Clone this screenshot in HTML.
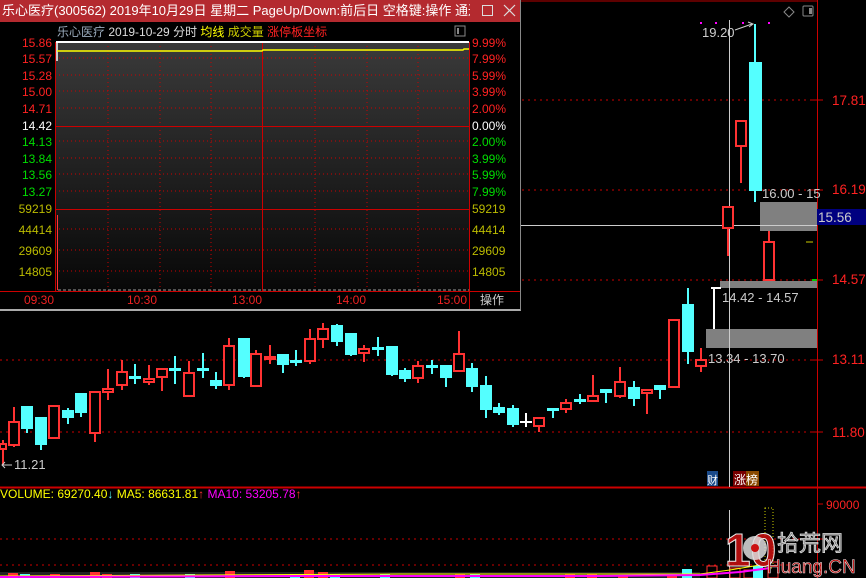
<!DOCTYPE html>
<html><head><meta charset="utf-8"><style>
html,body{margin:0;padding:0;background:#000;width:866px;height:578px;overflow:hidden}
body{position:relative;font-family:"Liberation Sans","Noto Sans CJK SC",sans-serif}
svg text{font-family:"Liberation Sans","Noto Sans CJK SC",sans-serif}
</style></head><body>
<svg width="866" height="578" style="position:absolute;left:0;top:0" xmlns="http://www.w3.org/2000/svg">
<line x1="0" y1="1" x2="817" y2="1" stroke="#b00" stroke-width="1"/>
<line x1="817.5" y1="0" x2="817.5" y2="578" stroke="#c00"/>
<line x1="0" y1="487.5" x2="866" y2="487.5" stroke="#c00" stroke-width="2"/>
<g stroke="#c00" stroke-dasharray="2,4">
<line x1="0" y1="100" x2="817" y2="100"/><line x1="0" y1="190" x2="817" y2="190"/>
<line x1="0" y1="280" x2="817" y2="280"/><line x1="0" y1="360" x2="817" y2="360"/>
<line x1="0" y1="432" x2="817" y2="432"/>
<line x1="0" y1="539" x2="817" y2="539"/><line x1="0" y1="565" x2="817" y2="565"/>
</g>
<g stroke="#c00"><line x1="812" y1="100" x2="823" y2="100"/><line x1="812" y1="190" x2="823" y2="190"/><line x1="812" y1="280" x2="823" y2="280"/><line x1="812" y1="360" x2="823" y2="360"/><line x1="812" y1="432" x2="823" y2="432"/><line x1="817" y1="504" x2="823" y2="504"/><line x1="817" y1="539" x2="823" y2="539"/></g>
<g fill="#f22" font-size="13.5">
<text x="832" y="105">17.81</text><text x="832" y="194">16.19</text><text x="832" y="284">14.57</text><text x="832" y="364">13.11</text><text x="832" y="437">11.80</text>
<text x="826" y="509" font-size="12">90000</text>
</g>
<rect x="817" y="209" width="49" height="16" fill="#000080"/>
<text x="818" y="222" fill="#ccc" font-size="13.5">15.56</text>
<rect x="706" y="329" width="111" height="19" fill="#808080"/>
<rect x="720" y="281" width="97" height="7" fill="#808080"/>
<rect x="760" y="202" width="57" height="29" fill="#808080"/>
<line x1="806" y1="242" x2="813" y2="242" stroke="#cc0"/>
<line x1="812" y1="280" x2="817" y2="280" stroke="#0c0" stroke-width="2"/>
<line x1="729.5" y1="20" x2="729.5" y2="487" stroke="#ccc"/>
<line x1="0" y1="225.5" x2="817" y2="225.5" stroke="#ccc"/>
<line x1="729.5" y1="510" x2="729.5" y2="578" stroke="#ccc"/>
<g stroke-width="2">
<g stroke="#ff3232" fill="#000">
<line x1="3" y1="440" x2="3" y2="465"/><rect x="0" y="444" width="6" height="5"/>
<line x1="14" y1="407" x2="14" y2="447"/><rect x="9" y="422" width="10" height="23"/>
<line x1="54" y1="406" x2="54" y2="438"/><rect x="49" y="406" width="10" height="32"/>
<line x1="95" y1="392" x2="95" y2="442"/><rect x="90" y="392" width="10" height="41"/>
<line x1="108" y1="369" x2="108" y2="400"/><rect x="103" y="389" width="10" height="3"/>
<line x1="122" y1="360" x2="122" y2="390"/><rect x="117" y="372" width="10" height="13"/>
<line x1="149" y1="365" x2="149" y2="385"/><rect x="144" y="379" width="10" height="3"/>
<line x1="162" y1="369" x2="162" y2="391"/><rect x="157" y="369" width="10" height="8"/>
<line x1="189" y1="361" x2="189" y2="396"/><rect x="184" y="373" width="10" height="23"/>
<line x1="229" y1="338" x2="229" y2="390"/><rect x="224" y="346" width="10" height="39"/>
<line x1="256" y1="350" x2="256" y2="386"/><rect x="251" y="354" width="10" height="32"/>
<line x1="270" y1="345" x2="270" y2="364"/><rect x="265" y="357" width="10" height="2"/>
<line x1="310" y1="329" x2="310" y2="364"/><rect x="305" y="339" width="10" height="22"/>
<line x1="323" y1="323" x2="323" y2="348"/><rect x="318" y="329" width="10" height="10"/>
<line x1="364" y1="345" x2="364" y2="362"/><rect x="359" y="349" width="10" height="4"/>
<line x1="418" y1="361" x2="418" y2="383"/><rect x="413" y="366" width="10" height="12"/>
<line x1="459" y1="331" x2="459" y2="371"/><rect x="454" y="354" width="10" height="17"/>
<line x1="539" y1="418" x2="539" y2="432"/><rect x="534" y="418" width="10" height="8"/>
<line x1="566" y1="399" x2="566" y2="413"/><rect x="561" y="403" width="10" height="6"/>
<line x1="593" y1="375" x2="593" y2="401"/><rect x="588" y="396" width="10" height="5"/>
<line x1="620" y1="367" x2="620" y2="398"/><rect x="615" y="382" width="10" height="14"/>
<line x1="647" y1="390" x2="647" y2="414"/><rect x="642" y="390" width="10" height="3"/>
<rect x="669" y="320" width="10" height="67"/>
<line x1="701" y1="348" x2="701" y2="372"/><rect x="696" y="360" width="10" height="6"/>
<line x1="728" y1="207" x2="728" y2="256"/><rect x="723" y="207" width="10" height="21"/>
<line x1="741" y1="120" x2="741" y2="183"/><rect x="736" y="121" width="10" height="25"/>
<line x1="769" y1="231" x2="769" y2="242"/><rect x="764" y="242" width="10" height="38"/>
</g>
<g stroke="#54ffff" fill="#54ffff">
<line x1="27" y1="407" x2="27" y2="433"/><rect x="22" y="407" width="10" height="21"/>
<line x1="41" y1="418" x2="41" y2="450"/><rect x="36" y="418" width="10" height="26"/>
<line x1="68" y1="408" x2="68" y2="424"/><rect x="63" y="411" width="10" height="6"/>
<line x1="81" y1="394" x2="81" y2="417"/><rect x="76" y="394" width="10" height="18"/>
<line x1="135" y1="364" x2="135" y2="384"/><rect x="130" y="377" width="10" height="1"/>
<line x1="175" y1="356" x2="175" y2="384"/><rect x="170" y="369" width="10" height="1"/>
<line x1="203" y1="353" x2="203" y2="378"/><rect x="198" y="369" width="10" height="1"/>
<line x1="216" y1="372" x2="216" y2="389"/><rect x="211" y="381" width="10" height="4"/>
<line x1="244" y1="339" x2="244" y2="378"/><rect x="239" y="339" width="10" height="37"/>
<line x1="283" y1="355" x2="283" y2="373"/><rect x="278" y="355" width="10" height="9"/>
<line x1="296" y1="350" x2="296" y2="366"/><rect x="291" y="361" width="10" height="1"/>
<line x1="337" y1="324" x2="337" y2="346"/><rect x="332" y="326" width="10" height="15"/>
<line x1="351" y1="334" x2="351" y2="356"/><rect x="346" y="334" width="10" height="20"/>
<line x1="378" y1="337" x2="378" y2="356"/><rect x="373" y="348" width="10" height="1"/>
<line x1="392" y1="347" x2="392" y2="376"/><rect x="387" y="347" width="10" height="27"/>
<line x1="405" y1="368" x2="405" y2="382"/><rect x="400" y="371" width="10" height="7"/>
<line x1="432" y1="360" x2="432" y2="374"/><rect x="427" y="366" width="10" height="1"/>
<line x1="446" y1="366" x2="446" y2="387"/><rect x="441" y="366" width="10" height="11"/>
<line x1="472" y1="363" x2="472" y2="392"/><rect x="467" y="369" width="10" height="17"/>
<line x1="486" y1="376" x2="486" y2="418"/><rect x="481" y="386" width="10" height="23"/>
<line x1="499" y1="403" x2="499" y2="415"/><rect x="494" y="408" width="10" height="4"/>
<line x1="513" y1="405" x2="513" y2="427"/><rect x="508" y="409" width="10" height="15"/>
<line x1="553" y1="409" x2="553" y2="418"/><rect x="548" y="409" width="10" height="1"/>
<line x1="580" y1="394" x2="580" y2="404"/><rect x="575" y="400" width="10" height="1"/>
<line x1="606" y1="390" x2="606" y2="403"/><rect x="601" y="390" width="10" height="2"/>
<line x1="634" y1="381" x2="634" y2="406"/><rect x="629" y="388" width="10" height="10"/>
<line x1="660" y1="386" x2="660" y2="399"/><rect x="655" y="386" width="10" height="3"/>
<line x1="688" y1="288" x2="688" y2="364"/><rect x="683" y="305" width="10" height="46"/>
<line x1="755" y1="24" x2="755" y2="202"/><rect x="750" y="63" width="11" height="127"/>
</g>
<g stroke="#fff"><line x1="526" y1="413" x2="526" y2="427"/><line x1="520" y1="422" x2="532" y2="422"/>
<line x1="714" y1="288" x2="714" y2="329"/><line x1="711" y1="288" x2="721" y2="288"/></g>
</g>
<g fill="#ccc" font-size="13">
<text x="708" y="363">13.34 - 13.70</text>
<text x="722" y="302">14.42 - 14.57</text>
<text x="762" y="198">16.00 - 15</text>
<text x="702" y="37">19.20</text>
<text x="14" y="469">11.21</text>
</g>
<path d="M735 30 L752 24 M748 22 L753 24 L749 27" stroke="#ccc" fill="none"/>
<path d="M2 465 L12 465 M5 462 L2 465 L5 468" stroke="#ccc" fill="none"/>
<g fill="#f0f"><rect x="700" y="22" width="2" height="2"/><rect x="715" y="22" width="2" height="2"/><rect x="742" y="22" width="2" height="2"/><rect x="768" y="22" width="2" height="2"/></g>
<path d="M789 7 L794 12 L789 17 L784 12 Z" stroke="#888" fill="none"/>
<rect x="803" y="6" width="10" height="10" stroke="#888" fill="none" rx="1"/><rect x="809" y="8" width="3" height="6" fill="#888"/>
<rect x="707" y="471" width="11" height="15" fill="#1a4a8a"/><text x="707" y="484" fill="#fff" font-size="11">财</text>
<rect x="733" y="471" width="13" height="15" fill="#700"/><rect x="746" y="471" width="13" height="15" fill="#8a4a00"/>
<text x="734" y="484" fill="#fff" font-size="12">涨榜</text>
<text x="0" y="498" font-size="12"><tspan fill="#ff0">VOLUME: 69270.40</tspan><tspan fill="#5ff">↓</tspan><tspan fill="#ff0"> MA5: 86631.81</tspan><tspan fill="#f33">↑</tspan><tspan fill="#f0f"> MA10: 53205.78</tspan><tspan fill="#f33">↑</tspan></text>
<g>
<rect x="0" y="572" width="700" height="6" fill="#222"/>
<g fill="#ff3232"><rect x="8" y="573" width="10" height="5"/><rect x="50" y="574" width="10" height="4"/><rect x="90" y="572" width="10" height="6"/><rect x="102" y="574" width="10" height="4"/><rect x="225" y="571" width="10" height="7"/><rect x="304" y="570" width="10" height="8"/><rect x="318" y="572" width="10" height="6"/><rect x="455" y="574" width="10" height="4"/><rect x="565" y="574" width="10" height="4"/><rect x="587" y="574" width="10" height="4"/><rect x="618" y="575" width="10" height="3"/><rect x="667" y="574" width="10" height="4"/></g>
<g fill="#54ffff"><rect x="20" y="574" width="10" height="4"/><rect x="130" y="574" width="10" height="4"/><rect x="185" y="574" width="10" height="4"/><rect x="290" y="574" width="10" height="4"/><rect x="330" y="574" width="10" height="4"/><rect x="380" y="574" width="10" height="4"/><rect x="470" y="574" width="10" height="4"/><rect x="682" y="569" width="10" height="9"/></g>
<g fill="none" stroke="#ff3232"><rect x="707" y="566" width="10" height="12"/><rect x="730" y="568" width="10" height="10"/><rect x="744" y="570" width="10" height="8"/><rect x="768" y="562" width="10" height="16"/></g>
<rect x="753" y="566" width="10" height="12" fill="#54ffff"/>
<polyline points="0,576 200,575 400,574 600,574 700,574 730,570 760,565" stroke="#ff0" fill="none"/>
<polyline points="0,577 300,576 600,576 700,575 740,572 770,568" stroke="#f0f" fill="none" stroke-width="2"/>
<rect x="765" y="508" width="8" height="60" fill="none" stroke="#cc0" stroke-dasharray="1,2"/>
</g>
<text x="725" y="566" fill="#c11" fill-opacity="0.85" font-size="46" font-weight="bold" stroke="#eee" stroke-width="1">10</text>
<circle cx="755" cy="548" r="12" fill="#ddd" fill-opacity="0.85"/><circle cx="755" cy="548" r="4" fill="#c11"/>
<text x="777" y="551" fill="#777" font-size="22" stroke="#ddd" stroke-width="0.8">拾荒网</text>
<text x="767" y="573" fill="#b00" font-size="19" stroke="#ddd" stroke-width="0.6">Huang.CN</text>
</svg>

<div style="position:absolute;left:0;top:0;width:520px;height:309px;background:#000;border-right:1px solid #888;border-bottom:2px solid #aaa">
<div style="height:22px;background:#b42a2f"></div>
<div style="position:absolute;left:2px;top:0;width:468px;height:22px;color:#fff;font-size:13px;line-height:22px;white-space:nowrap;overflow:hidden">乐心医疗(300562) 2019年10月29日 星期二 PageUp/Down:前后日 空格键:操作 通达...</div>
<svg width="40" height="22" style="position:absolute;left:480px;top:0" xmlns="http://www.w3.org/2000/svg">
<rect x="2.5" y="5.5" width="10" height="10" fill="none" stroke="#ddd"/>
<path d="M24 5 L35 16 M35 5 L24 16" stroke="#ddd" stroke-width="1.2"/>
</svg>
<svg width="520" height="287" style="position:absolute;left:0;top:22px" xmlns="http://www.w3.org/2000/svg">
<defs><linearGradient id="g" x1="0" y1="0" x2="0" y2="1"><stop offset="0" stop-color="#3a3a3a"/><stop offset="1" stop-color="#080808"/></linearGradient></defs>
<rect x="55" y="20" width="414" height="249" fill="url(#g)"/>
<text x="57" y="14" font-size="12"><tspan fill="#9ab">乐心医疗</tspan><tspan fill="#ddd">  2019-10-29 分时 </tspan><tspan fill="#ff0">均线 </tspan><tspan fill="#cc0">成交量 </tspan><tspan fill="#f22">涨停板坐标</tspan></text>
<rect x="455" y="4" width="10" height="10" fill="none" stroke="#888"/><rect x="457" y="6" width="2" height="6" fill="#888"/>
<g stroke="#c00" stroke-dasharray="1,3">
<line x1="55" y1="36" x2="469" y2="36"/><line x1="55" y1="53" x2="469" y2="53"/><line x1="55" y1="69" x2="469" y2="69"/><line x1="55" y1="86" x2="469" y2="86"/><line x1="55" y1="119" x2="469" y2="119"/><line x1="55" y1="136" x2="469" y2="136"/><line x1="55" y1="152" x2="469" y2="152"/><line x1="55" y1="169" x2="469" y2="169"/><line x1="55" y1="207" x2="469" y2="207"/><line x1="55" y1="228" x2="469" y2="228"/><line x1="55" y1="249" x2="469" y2="249"/>
<line x1="108" y1="20" x2="108" y2="269"/><line x1="160" y1="20" x2="160" y2="269"/><line x1="211" y1="20" x2="211" y2="269"/><line x1="315" y1="20" x2="315" y2="269"/><line x1="367" y1="20" x2="367" y2="269"/><line x1="418" y1="20" x2="418" y2="269"/>
</g>
<g stroke="#c00"><line x1="55" y1="104.5" x2="469" y2="104.5"/><line x1="55" y1="187.5" x2="469" y2="187.5"/><line x1="262.5" y1="20" x2="262.5" y2="269"/><line x1="55.5" y1="20" x2="55.5" y2="269"/><line x1="469.5" y1="20" x2="469.5" y2="287"/><line x1="0" y1="269.5" x2="520" y2="269.5"/></g>
<line x1="56" y1="20" x2="469" y2="20" stroke="#fff" stroke-width="2"/>
<line x1="57" y1="20" x2="57" y2="39" stroke="#fff" stroke-width="1.5"/>
<polyline points="57,29 262,29 263,28 463,28 464,27 469,27" stroke="#ff0" fill="none" stroke-width="1.5"/>
<line x1="57.5" y1="193" x2="57.5" y2="268" stroke="#f33"/>
<line x1="58" y1="268" x2="469" y2="268" stroke="#ddd" stroke-dasharray="3,2" stroke-opacity="0.7"/>
<g font-size="12" text-anchor="end">
<text x="52" y="25" fill="#f22">15.86</text><text x="52" y="41" fill="#f22">15.57</text><text x="52" y="58" fill="#f22">15.28</text><text x="52" y="74" fill="#f22">15.00</text><text x="52" y="91" fill="#f22">14.71</text><text x="52" y="108" fill="#fff">14.42</text><text x="52" y="124" fill="#0d0">14.13</text><text x="52" y="141" fill="#0d0">13.84</text><text x="52" y="157" fill="#0d0">13.56</text><text x="52" y="174" fill="#0d0">13.27</text><text x="52" y="191" fill="#bb0">59219</text><text x="52" y="212" fill="#bb0">44414</text><text x="52" y="233" fill="#bb0">29609</text><text x="52" y="254" fill="#bb0">14805</text>
</g>
<g font-size="12">
<text x="472" y="25" fill="#f22">9.99%</text><text x="472" y="41" fill="#f22">7.99%</text><text x="472" y="58" fill="#f22">5.99%</text><text x="472" y="74" fill="#f22">3.99%</text><text x="472" y="91" fill="#f22">2.00%</text><text x="472" y="108" fill="#fff">0.00%</text><text x="472" y="124" fill="#0d0">2.00%</text><text x="472" y="141" fill="#0d0">3.99%</text><text x="472" y="157" fill="#0d0">5.99%</text><text x="472" y="174" fill="#0d0">7.99%</text><text x="472" y="191" fill="#bb0">59219</text><text x="472" y="212" fill="#bb0">44414</text><text x="472" y="233" fill="#bb0">29609</text><text x="472" y="254" fill="#bb0">14805</text>
<text x="24" y="282" fill="#e22">09:30</text><text x="127" y="282" fill="#e22">10:30</text><text x="232" y="282" fill="#e22">13:00</text><text x="336" y="282" fill="#e22">14:00</text><text x="437" y="282" fill="#e22">15:00</text>
<text x="480" y="282" fill="#ccc">操作</text>
</g>
</svg>
</div>
</body></html>
